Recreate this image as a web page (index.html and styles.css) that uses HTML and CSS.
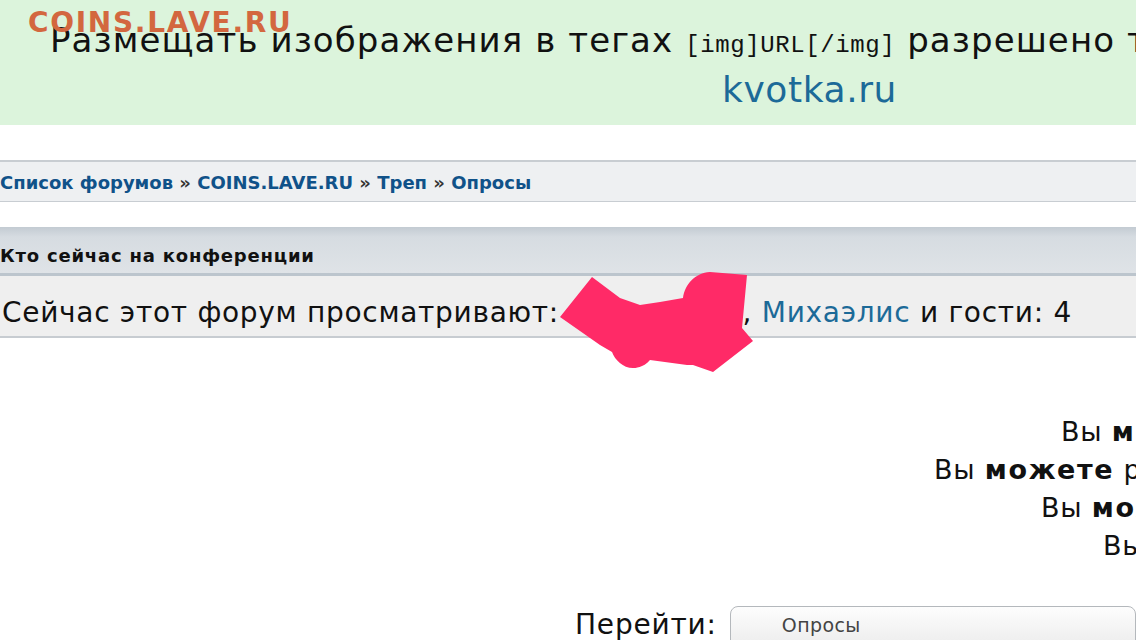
FILE: index.html
```html
<!DOCTYPE html>
<html lang="ru">
<head>
  <meta charset="UTF-8" />
  <title>Опросы - COINS.LAVE.RU</title>
  <link rel="stylesheet" href="styles.css">
</head>
<body>
  <div class="banner">
    <div class="watermark">COINS.LAVE.RU</div>
    <div class="banner-line">Размещать изображения в тегах <code>[img]URL[/img]</code> разрешено только с хостинга</div>
    <div class="banner-link"><a href="#">kvotka.ru</a></div>
  </div>

  <div class="navbar">
    <a href="#">Список форумов</a> » <a href="#">COINS.LAVE.RU</a> » <a href="#">Треп</a> » <a href="#">Опросы</a>
  </div>

  <div class="block">
    <h3 class="block-head">Кто сейчас на конференции</h3>
    <div class="block-row">
      Сейчас этот форум просматривают: <span class="hidden-name">Пользователь</span>, <a href="#">Михаэлис</a> и гости: 4
      <svg class="scribble" viewBox="0 0 205 110" width="205" height="110">
        <path d="M5 49 L37 9 L65 30 L85 37 L105 34 L128 30
                 C130 16 140 5 155 4 L192 7 L187 60 L198 73 L158 104
                 L138 97 L132 97 L95 92 C88 100 80 100 78 100
                 C68 100 60 92 57 84 L45 77 Z" fill="#ff2a67"/>
      </svg>
    </div>
  </div>

  <div class="rules">
    <p class="rule r1">Вы <strong>можете</strong> начинать темы</p>
    <p class="rule r2">Вы <strong>можете</strong> редактировать свои сообщения</p>
    <p class="rule r3">Вы <strong>можете</strong> удалять свои сообщения</p>
    <p class="rule r4">Вы не можете добавлять вложения</p>
  </div>

  <div class="jump">
    <span class="jump-label">Перейти:</span>
    <div class="jump-select">Опросы</div>
  </div>
</body>
</html>
```

FILE: styles.css
```css
body {
  margin: 0;
  font-family: "DejaVu Sans", Verdana, sans-serif;
  color: #111;
  background: #fff;
  overflow: hidden;
  width: 1136px;
  height: 640px;
}

a {
  text-decoration: none;
  color: #1c6a98;
}

.banner {
  position: relative;
  height: 125px;
  background: #dcf4dc;
  white-space: nowrap;
}

.watermark {
  position: absolute;
  top: 6px;
  left: 28px;
  font-size: 28px;
  font-weight: bold;
  letter-spacing: 1.7px;
  color: #d3673f;
  z-index: 2;
}

.banner-line {
  padding: 19px 0 0 50px;
  font-size: 34px;
  letter-spacing: 1.1px;
  line-height: 42px;
  color: #111;
}

.banner-line code {
  font-family: "Liberation Mono", monospace;
  font-size: 24px;
  letter-spacing: 0.6px;
}

.banner-link {
  padding-left: 722px;
  font-size: 36px;
  letter-spacing: 0.6px;
  line-height: 46px;
}

.navbar {
  margin-top: 35px;
  height: 39px;
  line-height: 41px;
  background: #eef0f2;
  border-top: 2px solid #c8cdd2;
  border-bottom: 1px solid #c8cdd2;
  font-size: 18px;
  font-weight: bold;
  color: #333;
  white-space: nowrap;
}

.navbar a {
  color: #105289;
}

.block {
  margin-top: 25px;
}

.block-head {
  margin: 0;
  height: 46px;
  line-height: 57px;
  font-size: 18px;
  letter-spacing: 0.8px;
  font-weight: bold;
  color: #111;
  background: linear-gradient(to bottom, #c3cbd2 0px, #d6dce1 10px, #dfe3e7 46px);
  border-bottom: 3px solid #bcc5cd;
}

.block-row {
  position: relative;
  height: 60px;
  line-height: 74px;
  padding-left: 2px;
  font-size: 28px;
  letter-spacing: 0.7px;
  background: #efefef;
  border-bottom: 2px solid #c7ccd1;
  white-space: nowrap;
}

.block-row a {
  color: #1c6a98;
}

.hidden-name {
  display: inline-block;
  width: 160px;
  padding-left: 14px;
  overflow: hidden;
  vertical-align: bottom;
  color: #333;
}

.scribble {
  position: absolute;
  left: 555px;
  top: -8px;
}

.rules {
  margin-top: 75px;
}

.rule {
  margin: 0;
  font-size: 27px;
  letter-spacing: 0.8px;
  line-height: 38px;
  white-space: nowrap;
}

.rule strong {
  letter-spacing: 1.6px;
}

.r1 { padding-left: 1061px; }
.r2 { padding-left: 934px; }
.r3 { padding-left: 1041px; }
.r4 { padding-left: 1103px; }

.jump {
  display: flex;
  align-items: flex-start;
  margin-top: 39px;
  padding-left: 575px;
  white-space: nowrap;
}

.jump-label {
  font-size: 28px;
  letter-spacing: 0.8px;
  line-height: 32px;
  padding-top: 5px;
}

.jump-select {
  margin-left: 13px;
  width: 500px;
  height: 40px;
  margin-top: 2px;
  padding-left: 51px;
  line-height: 37px;
  font-size: 19px;
  letter-spacing: 0.4px;
  color: #444;
  border: 1px solid #b4b8bc;
  border-radius: 8px;
  background: linear-gradient(to bottom, #fdfdfd, #ececec);
}
```
